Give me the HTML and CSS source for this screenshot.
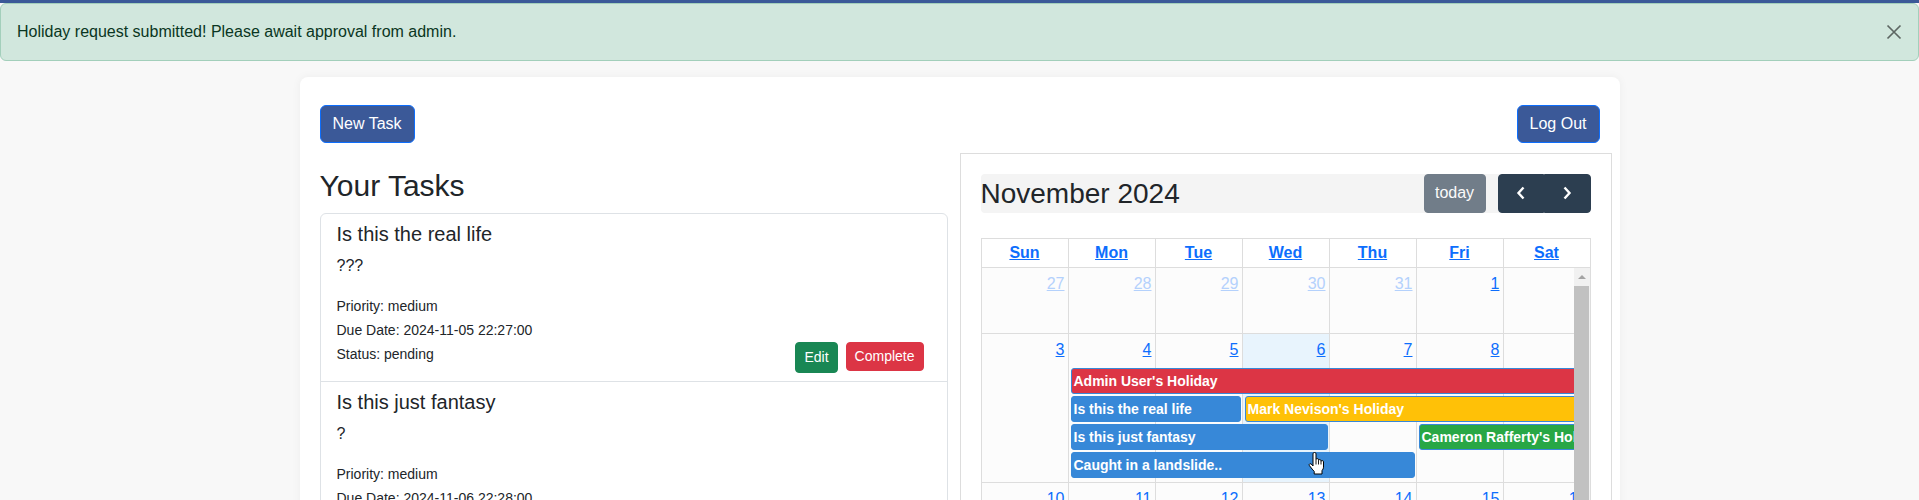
FILE: index.html
```html
<!DOCTYPE html>
<html lang="en">
<head>
<meta charset="utf-8">
<title>Tasks</title>
<link rel="stylesheet" href="styles.css">
</head>
<body>
<div class="topbar"></div>
<div class="alert">
  <span>Holiday request submitted! Please await approval from admin.</span>
  <button class="alert-close" aria-label="Close">
    <svg width="16" height="16" viewBox="0 0 16 16"><path d="M1.5 1.5L14.5 14.5M14.5 1.5L1.5 14.5" stroke="#000" stroke-width="1.7" fill="none"/></svg>
  </button>
</div>

<main class="card">
  <div class="actions">
    <button class="btn">New Task</button>
    <button class="btn">Log Out</button>
  </div>

  <div class="columns">
    <section class="tasks">
      <h2 class="tasks-title">Your Tasks</h2>
      <ul class="task-list">
        <li class="task">
          <h5 class="task-name">Is this the real life</h5>
          <p class="task-desc">???</p>
          <div class="meta">Priority: medium</div>
          <div class="meta">Due Date: 2024-11-05 22:27:00</div>
          <div class="meta-row">
            <div class="meta">Status: pending</div>
            <div class="task-btns">
              <a class="btn-sm btn-edit">Edit</a>
              <button class="btn-sm btn-complete">Complete</button>
            </div>
          </div>
        </li>
        <li class="task">
          <h5 class="task-name">Is this just fantasy</h5>
          <p class="task-desc">?</p>
          <div class="meta">Priority: medium</div>
          <div class="meta">Due Date: 2024-11-06 22:28:00</div>
          <div class="meta-row">
            <div class="meta">Status: pending</div>
            <div class="task-btns">
              <a class="btn-sm btn-edit">Edit</a>
              <button class="btn-sm btn-complete">Complete</button>
            </div>
          </div>
        </li>
      </ul>
    </section>

    <section class="calendar">
      <div class="toolbar">
        <h2 class="cal-title">November 2024</h2>
        <button class="fc-btn today-btn">today</button>
        <div class="nav">
          <button class="fc-btn nav-btn" aria-label="prev"><svg width="10" height="14" viewBox="0 0 10 14"><polyline points="7.5,1.5 2.5,7 7.5,12.5" fill="none" stroke="#fff" stroke-width="2.4"/></svg></button>
          <button class="fc-btn nav-btn" aria-label="next"><svg width="10" height="14" viewBox="0 0 10 14"><polyline points="2.5,1.5 7.5,7 2.5,12.5" fill="none" stroke="#fff" stroke-width="2.4"/></svg></button>
        </div>
      </div>

      <div class="grid">
        <div class="head">
          <div class="head-cell"><a>Sun</a></div>
          <div class="head-cell"><a>Mon</a></div>
          <div class="head-cell"><a>Tue</a></div>
          <div class="head-cell"><a>Wed</a></div>
          <div class="head-cell"><a>Thu</a></div>
          <div class="head-cell"><a>Fri</a></div>
          <div class="head-cell"><a>Sat</a></div>
        </div>
        <div class="body">
          <div class="viewport">
            <div class="week week-short">
              <div class="day-bg c1"></div><div class="day-bg c2"></div><div class="day-bg c3"></div><div class="day-bg c4"></div><div class="day-bg c5"></div><div class="day-bg c6"></div><div class="day-bg c7"></div>
              <div class="day-num other c1"><a>27</a></div>
              <div class="day-num other c2"><a>28</a></div>
              <div class="day-num other c3"><a>29</a></div>
              <div class="day-num other c4"><a>30</a></div>
              <div class="day-num other c5"><a>31</a></div>
              <div class="day-num c6"><a>1</a></div>
              <div class="day-num c7"><a>2</a></div>
            </div>
            <div class="week week-events">
              <div class="day-bg c1"></div><div class="day-bg c2"></div><div class="day-bg c3"></div><div class="day-bg c4 is-today"></div><div class="day-bg c5"></div><div class="day-bg c6"></div><div class="day-bg c7"></div>
              <div class="day-num c1"><a>3</a></div>
              <div class="day-num c2"><a>4</a></div>
              <div class="day-num c3"><a>5</a></div>
              <div class="day-num c4"><a>6</a></div>
              <div class="day-num c5"><a>7</a></div>
              <div class="day-num c6"><a>8</a></div>
              <div class="day-num c7"><a>9</a></div>
              <div class="event ev-red r2 span-mon-sat">Admin User's Holiday</div>
              <div class="event ev-blue r3 span-mon-tue">Is this the real life</div>
              <div class="event ev-yellow r3 span-wed-sat">Mark Nevison's Holiday</div>
              <div class="event ev-blue r4 span-mon-wed">Is this just fantasy</div>
              <div class="event ev-green r4 span-fri-sat">Cameron Rafferty's Holiday</div>
              <div class="event ev-blue r5 span-mon-thu">Caught in a landslide..</div>
            </div>
            <div class="week week-short">
              <div class="day-bg c1"></div><div class="day-bg c2"></div><div class="day-bg c3"></div><div class="day-bg c4"></div><div class="day-bg c5"></div><div class="day-bg c6"></div><div class="day-bg c7"></div>
              <div class="day-num c1"><a>10</a></div>
              <div class="day-num c2"><a>11</a></div>
              <div class="day-num c3"><a>12</a></div>
              <div class="day-num c4"><a>13</a></div>
              <div class="day-num c5"><a>14</a></div>
              <div class="day-num c6"><a>15</a></div>
              <div class="day-num c7"><a>16</a></div>
            </div>
            <div class="week week-short">
              <div class="day-bg c1"></div><div class="day-bg c2"></div><div class="day-bg c3"></div><div class="day-bg c4"></div><div class="day-bg c5"></div><div class="day-bg c6"></div><div class="day-bg c7"></div>
              <div class="day-num c1"><a>17</a></div>
              <div class="day-num c2"><a>18</a></div>
              <div class="day-num c3"><a>19</a></div>
              <div class="day-num c4"><a>20</a></div>
              <div class="day-num c5"><a>21</a></div>
              <div class="day-num c6"><a>22</a></div>
              <div class="day-num c7"><a>23</a></div>
            </div>
          </div>
          <div class="scrollbar">
            <div class="sb-arrow"><span class="sb-tri"></span></div>
            <div class="sb-thumb"></div>
          </div>
        </div>
      </div>

      <svg class="cursor" width="17" height="23" viewBox="0 0 17 23">
        <path d="M5 1.8Q5 0.5 6.5 0.5Q8 0.5 8 1.8V7.6Q8 6.6 9.25 6.6Q10.5 6.6 10.5 7.8V8.6Q10.5 7.6 11.75 7.6Q13 7.6 13 8.8V9.6Q13 8.6 14.25 8.6Q15.5 8.6 15.5 9.8V15.2Q15.5 17 14 18.6V22H6.2V19.4Q4.6 17.8 1.4 13.6Q0.7 12.4 1.8 11.8Q2.8 11.3 4 12.8L5 14Z" fill="#fff" stroke="#000" stroke-width="1" stroke-linejoin="round"/>
        <path d="M8 8V12.5M10.5 9V12.5M13 10V12.5" stroke="#000" stroke-width="0.9" fill="none"/>
      </svg>
    </section>
  </div>
</main>
</body>
</html>
```

FILE: styles.css
```css
* {
  box-sizing: border-box;
}

html {
  overflow: hidden;
}

body {
  margin: 0;
  background: #f8f8f8;
  font-family: "Liberation Sans", Arial, sans-serif;
  font-size: 16px;
  line-height: 1.5;
  color: #212529;
}

.topbar {
  height: 3px;
  background: #3b5998;
}

.alert {
  display: flex;
  align-items: center;
  justify-content: space-between;
  padding: 16px;
  background: #d1e7dd;
  border: 1px solid #a3cfbb;
  border-radius: 6px;
  color: #0a3622;
}

.alert-close {
  display: flex;
  width: 16px;
  height: 16px;
  padding: 0;
  border: 0;
  background: none;
  opacity: 0.55;
}

.card {
  width: 1320px;
  margin: 16px auto 0;
  padding: 28px 20px 20px;
  background: #fff;
  border-radius: 8px;
  box-shadow: 0 0 10px rgba(0, 0, 0, 0.05);
}

.actions {
  display: flex;
  justify-content: space-between;
  margin-bottom: 10px;
}

.btn {
  font-family: inherit;
  font-size: 16px;
  line-height: 24px;
  padding: 6px 12px;
  border: 1px solid #0d6efd;
  border-radius: 6px;
  background: #3b5998;
  color: #fff;
}

.columns {
  display: grid;
  grid-template-columns: 1fr 1fr;
  align-items: start;
  margin: 0 -12px;
}

.tasks {
  padding: 15px 12px 0;
}

.tasks-title {
  margin: 0 0 9px;
  font-size: 30px;
  font-weight: 400;
  line-height: 1.2;
}

.task-list {
  list-style: none;
  margin: 0;
  padding: 0;
  border: 1px solid #dee2e6;
  border-radius: 6px;
}

.task {
  padding: 8px 16px;
  border-bottom: 1px solid #dee2e6;
}

.task-name {
  margin: 0 0 8px;
  font-size: 20px;
  font-weight: 400;
  line-height: 1.2;
}

.task-desc {
  margin: 0 0 16px;
}

.meta {
  font-size: 14px;
  line-height: 24px;
}

.meta-row {
  display: flex;
  justify-content: space-between;
  align-items: flex-start;
}

.task-btns {
  display: flex;
  align-items: flex-start;
  gap: 8px;
  margin-right: 7px;
}

.btn-sm {
  font-family: inherit;
  font-size: 14px;
  line-height: 21px;
  padding: 4px 8px;
  border: 1px solid;
  border-radius: 4px;
  color: #fff;
}

.btn-edit {
  background: #198754;
  border-color: #198754;
}

.btn-complete {
  background: #dc3545;
  border-color: #dc3545;
  line-height: 19px;
}

/* calendar */
.calendar {
  position: relative;
  padding: 20px;
  border: 1px solid #ddd;
  background: #fff;
}

.toolbar {
  display: flex;
  align-items: center;
  gap: 12px;
  margin-bottom: 25px;
  background: #f4f4f4;
  border-radius: 4px;
}

.cal-title {
  flex: 1;
  margin: 0;
  font-size: 28px;
  font-weight: 400;
  line-height: 1.2;
}

.fc-btn {
  font-family: inherit;
  font-size: 16px;
  line-height: 24px;
  padding: 6.4px 10.4px;
  border: 1px solid #2c3e50;
  border-radius: 4px;
  background: #2c3e50;
  color: #fff;
}

.today-btn {
  opacity: 0.65;
}

.nav {
  display: flex;
}

.nav-btn {
  display: flex;
  align-items: center;
  justify-content: center;
  width: 46.5px;
  height: 38.8px;
  padding: 0;
}

.nav-btn:first-child {
  border-radius: 4px 0 0 4px;
}

.nav-btn:last-child {
  border-radius: 0 4px 4px 0;
}

.grid {
  border-left: 1px solid #ddd;
}

.head {
  display: grid;
  grid-template-columns: repeat(7, 87px);
  border-top: 1px solid #ddd;
  background: #fff;
}

.head-cell {
  padding: 2px 4px;
  text-align: center;
  font-weight: 700;
  border-right: 1px solid #ddd;
  border-bottom: 1px solid #ddd;
}

.head-cell a,
.day-num a {
  color: #0d6efd;
  text-decoration: underline;
}

.body {
  display: flex;
}

.viewport {
  width: 592px;
  overflow: hidden;
}

.week {
  display: grid;
  grid-template-columns: repeat(7, 87px);
  width: 609px;
}

.week-short {
  grid-template-rows: 66px;
}

.week-events {
  grid-template-rows: 34px repeat(4, 28px) 3px;
}

.day-bg {
  grid-row: 1 / -1;
  background: #fcfcfc;
  border-right: 1px solid #ddd;
  border-bottom: 1px solid #ddd;
}

.day-bg.is-today {
  background: #e8f4fd;
}

.day-num {
  grid-row: 1;
  padding: 4px 4px 0;
  text-align: right;
  line-height: 24px;
}

.day-num.other a {
  color: #b4d1fc;
  text-decoration-color: #b4d1fc;
}

.c1 { grid-column: 1; }
.c2 { grid-column: 2; }
.c3 { grid-column: 3; }
.c4 { grid-column: 4; }
.c5 { grid-column: 5; }
.c6 { grid-column: 6; }
.c7 { grid-column: 7; }

.r2 { grid-row: 2; }
.r3 { grid-row: 3; }
.r4 { grid-row: 4; }
.r5 { grid-row: 5; }

.span-mon-sat { grid-column: 2 / 8; }
.span-mon-tue { grid-column: 2 / 4; }
.span-wed-sat { grid-column: 4 / 8; }
.span-mon-wed { grid-column: 2 / 5; }
.span-fri-sat { grid-column: 6 / 8; }
.span-mon-thu { grid-column: 2 / 6; }

.event {
  align-self: start;
  height: 26px;
  margin: 0 2px;
  padding: 0 2px;
  border: 1px solid #3788d8;
  border-radius: 3px;
  color: #fff;
  font-size: 14px;
  font-weight: 700;
  line-height: 24px;
  white-space: nowrap;
  overflow: hidden;
}

.span-mon-sat,
.span-wed-sat,
.span-fri-sat {
  margin-right: 0;
}

.ev-blue { background: #3788d8; }
.ev-red { background: #dc3545; }
.ev-yellow { background: #ffc107; }
.ev-green { background: #28a745; }

.scrollbar {
  display: flex;
  flex-direction: column;
  width: 17px;
  background: #f1f1f1;
  border-right: 1px solid #ddd;
}

.sb-arrow {
  display: flex;
  align-items: center;
  justify-content: center;
  height: 18px;
}

.sb-tri {
  width: 0;
  height: 0;
  border-left: 4px solid transparent;
  border-right: 4px solid transparent;
  border-bottom: 4px solid #a3a3a3;
}

.sb-thumb {
  flex: 1;
  margin-right: 1px;
  background: #c1c1c1;
}

.cursor {
  position: absolute;
  left: 347px;
  top: 298px;
}
```
